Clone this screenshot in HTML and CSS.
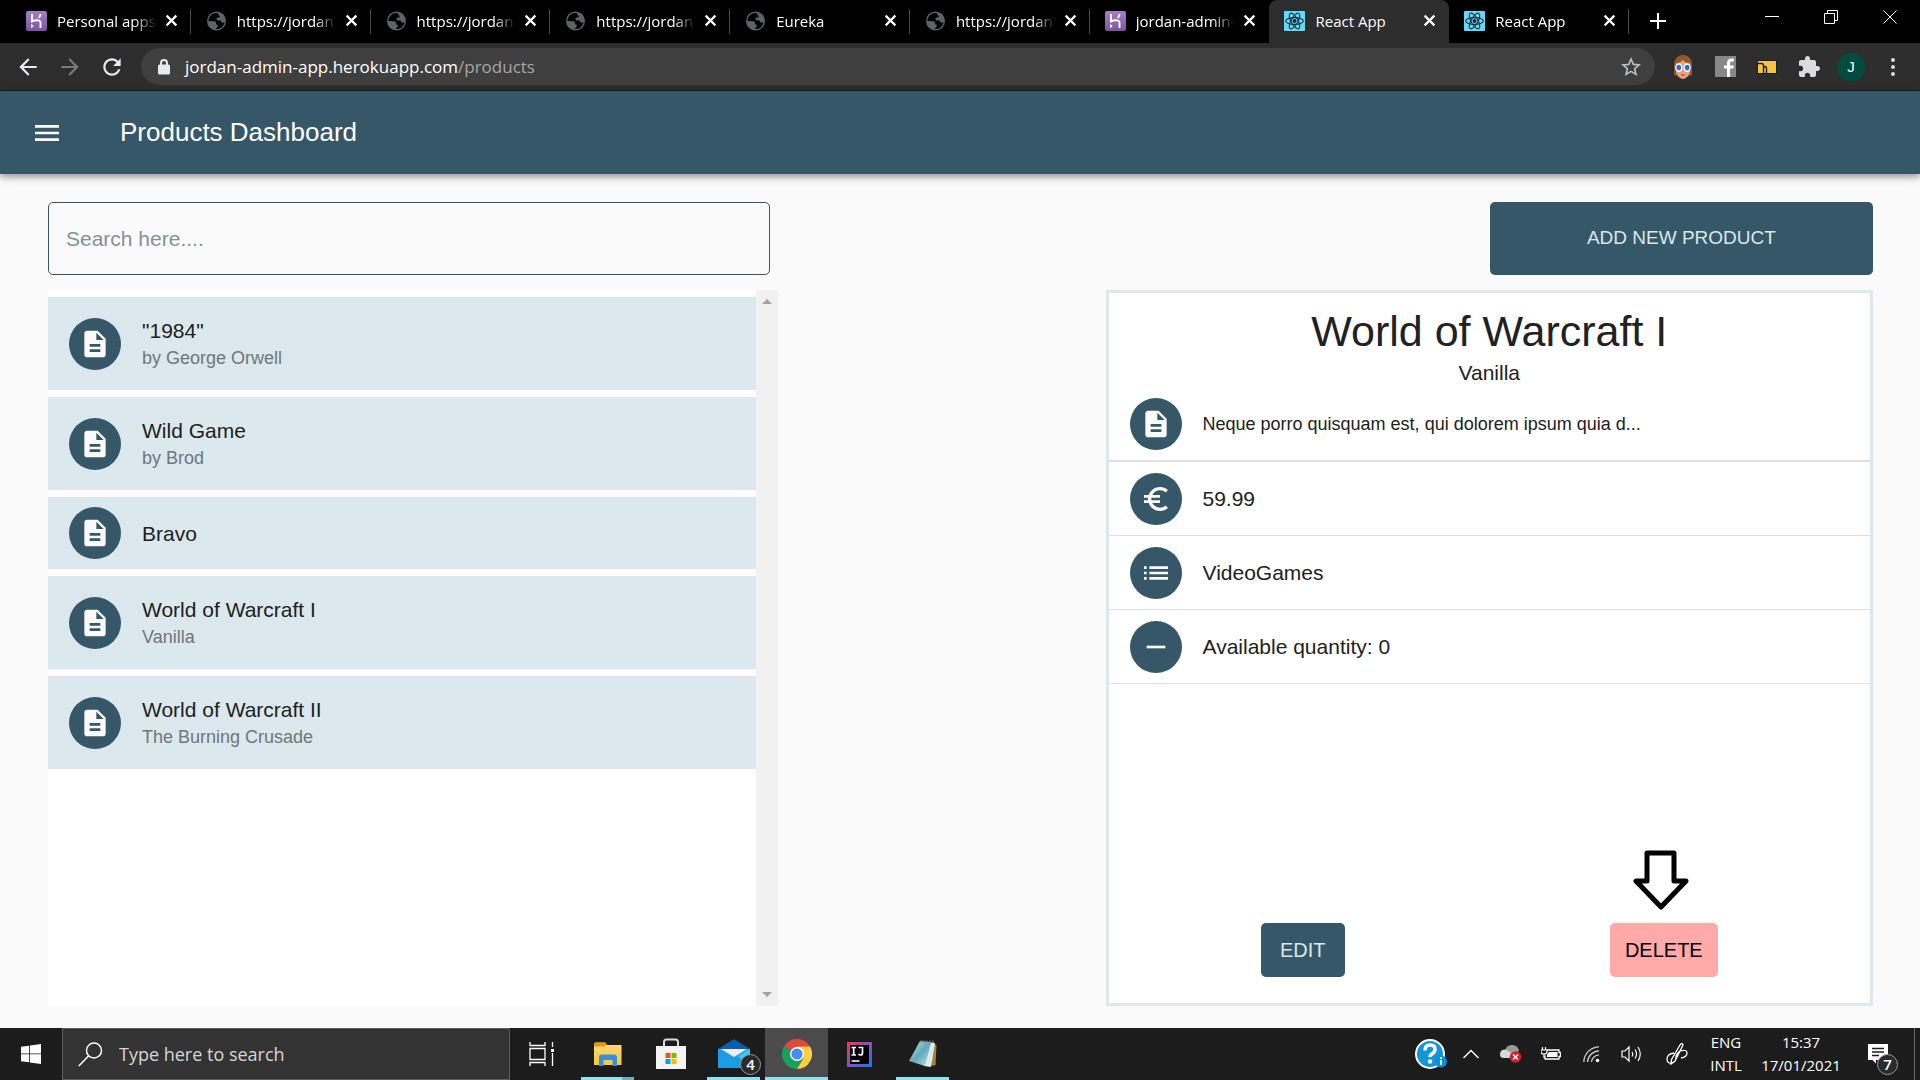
FILE: index.html
```html
<!DOCTYPE html>
<html lang="en">
<head>
<meta charset="utf-8">
<title>React App</title>
<link rel="stylesheet" href="styles.css">
</head>
<body>
<svg class="sprite" aria-hidden="true">
  <defs>
    <linearGradient id="g-heroku" x1="0" y1="0" x2="0" y2="1"><stop offset="0" stop-color="#a57fc6"/><stop offset="1" stop-color="#7a559f"/></linearGradient>
    <linearGradient id="g-idea" x1="0" y1="0" x2="1" y2="1"><stop offset="0" stop-color="#fe315d"/><stop offset=".5" stop-color="#8a4fc4"/><stop offset="1" stop-color="#087cfa"/></linearGradient>
    <linearGradient id="g-note" x1="0" y1="0" x2="1" y2="1"><stop offset="0" stop-color="#d6eef2"/><stop offset=".5" stop-color="#5fa9b8"/><stop offset="1" stop-color="#c4e4ea"/></linearGradient>
    <linearGradient id="g-folder" x1="0" y1="0" x2="0" y2="1"><stop offset="0" stop-color="#ffd977"/><stop offset="1" stop-color="#f9c83c"/></linearGradient>
  </defs>
  <symbol id="heroku" viewBox="0 0 21 20"><rect width="21" height="20" rx="2" fill="url(#g-heroku)"/><path d="M6 3v7.500c2-1 8.500-2.500 8.500 1V17M14.500 3c0 1.500-.6 2.800-1.600 4" fill="none" stroke="#fff" stroke-width="1.900"/><path d="M5.200 13v4.200L7.800 15z" fill="#fff"/></symbol>
  <symbol id="globe" viewBox="0 0 20 20"><circle cx="10" cy="10" r="9.500" fill="#5f6368"/><path d="M11.500 2.200C7 1 2 4.500 2 10l5.600.2c1.400 0 2 .8 2 2v1.300h1.600v2.200L9 17.900c4.800.7 8.600-2.600 9-7-1 1-2.500 1-3.200 0l-.7-1.500h-3.200l-1-1.200c0-1.400.7-1.800 1.600-1.800h1.600V4.800c-1-.6-1.700-1.500-1.600-2.600z" fill="#000"/></symbol>
  <symbol id="react" viewBox="0 0 21 20"><rect width="21" height="20" rx="1" fill="#61dafb"/><g fill="none" stroke="#222b33" stroke-width="1.100"><ellipse cx="10.500" cy="10" rx="8.800" ry="3.400"/><ellipse cx="10.500" cy="10" rx="8.800" ry="3.400" transform="rotate(60 10.500 10)"/><ellipse cx="10.500" cy="10" rx="8.800" ry="3.400" transform="rotate(120 10.500 10)"/></g><circle cx="10.500" cy="10" r="2" fill="#222b33"/></symbol>
  <symbol id="close" viewBox="0 0 12 12"><path d="M1.500 1.500l9 9M10.500 1.500l-9 9" stroke="currentColor" stroke-width="2"/></symbol>
  <symbol id="doc" viewBox="0 0 24 24"><path fill="currentColor" d="M14 2H6c-1.100 0-1.990.9-1.990 2L4 20c0 1.100.89 2 1.990 2H18c1.100 0 2-.9 2-2V8l-6-6zm2 16H8v-2h8v2zm0-4H8v-2h8v2zm-3-5V3.500L18.500 9H13z"/></symbol>
  <symbol id="euro" viewBox="0 0 24 24"><path fill="currentColor" d="M15 18.500c-2.510 0-4.680-1.420-5.760-3.500H15v-2H8.580c-.05-.33-.08-.66-.08-1s.03-.67.08-1H15V9H9.240C10.320 6.920 12.500 5.500 15 5.500c1.610 0 3.090.59 4.230 1.570L21 5.300C19.410 3.870 17.300 3 15 3c-3.920 0-7.240 2.510-8.480 6H3v2h3.060c-.04.33-.06.66-.06 1s.02.67.06 1H3v2h3.520c1.240 3.490 4.560 6 8.480 6 2.310 0 4.410-.87 6-2.300l-1.780-1.770c-1.130.98-2.600 1.570-4.220 1.570z"/></symbol>
  <symbol id="list" viewBox="0 0 24 24"><path fill="currentColor" d="M3 13h2v-2H3v2zm0 4h2v-2H3v2zm0-8h2V7H3v2zm4 4h14v-2H7v2zm0 4h14v-2H7v2zM7 7v2h14V7H7z"/></symbol>
  <symbol id="minus" viewBox="0 0 24 24"><path fill="currentColor" d="M19 13H5v-2h14v2z"/></symbol>
  <symbol id="arrow" viewBox="0 0 24 24"><path fill="currentColor" d="M20 11H7.830l5.590-5.590L12 4l-8 8 8 8 1.410-1.410L7.830 13H20v-2z"/></symbol>
</svg>

<div class="tabstrip">
  <div class="tabs">
    <div class="tab"><svg class="favicon"><use href="#heroku"/></svg><span class="tab-title">Personal apps</span><button class="tab-close" aria-label="Close tab"><svg><use href="#close"/></svg></button></div>
    <div class="tab"><svg class="favicon"><use href="#globe"/></svg><span class="tab-title">https://jordan</span><button class="tab-close" aria-label="Close tab"><svg><use href="#close"/></svg></button></div>
    <div class="tab"><svg class="favicon"><use href="#globe"/></svg><span class="tab-title">https://jordan</span><button class="tab-close" aria-label="Close tab"><svg><use href="#close"/></svg></button></div>
    <div class="tab"><svg class="favicon"><use href="#globe"/></svg><span class="tab-title">https://jordan</span><button class="tab-close" aria-label="Close tab"><svg><use href="#close"/></svg></button></div>
    <div class="tab"><svg class="favicon"><use href="#globe"/></svg><span class="tab-title">Eureka</span><button class="tab-close" aria-label="Close tab"><svg><use href="#close"/></svg></button></div>
    <div class="tab"><svg class="favicon"><use href="#globe"/></svg><span class="tab-title">https://jordan</span><button class="tab-close" aria-label="Close tab"><svg><use href="#close"/></svg></button></div>
    <div class="tab tab-before-active"><svg class="favicon"><use href="#heroku"/></svg><span class="tab-title">jordan-admin-</span><button class="tab-close" aria-label="Close tab"><svg><use href="#close"/></svg></button></div>
    <div class="tab tab-active"><svg class="favicon"><use href="#react"/></svg><span class="tab-title">React App</span><button class="tab-close" aria-label="Close tab"><svg><use href="#close"/></svg></button></div>
    <div class="tab"><svg class="favicon"><use href="#react"/></svg><span class="tab-title">React App</span><button class="tab-close" aria-label="Close tab"><svg><use href="#close"/></svg></button></div>
  </div>
  <button class="new-tab" aria-label="New tab"><svg width="16" height="16" viewBox="0 0 16 16"><path d="M8 0v16M0 8h16" stroke="#fff" stroke-width="2"/></svg></button>
  <div class="window-controls">
    <button aria-label="Minimise"><svg width="14" height="14" viewBox="0 0 14 14"><path d="M0 6.500h14" stroke="#fff"/></svg></button>
    <button aria-label="Restore"><svg width="14" height="14" viewBox="0 0 14 14" fill="none" stroke="#fff"><path d="M.5 3.500h10v10H.5zM3.500 3.500v-3h10v10h-3"/></svg></button>
    <button aria-label="Close"><svg width="14" height="14" viewBox="0 0 14 14"><path d="M.5.5l13 13M13.500.5l-13 13" stroke="#fff"/></svg></button>
  </div>
</div>

<div class="toolbar">
  <div class="nav-buttons">
    <button aria-label="Back"><svg width="26" height="26"><use href="#arrow"/></svg></button>
    <button class="dim" aria-label="Forward"><svg width="26" height="26" class="flip"><use href="#arrow"/></svg></button>
    <button aria-label="Reload"><svg width="26" height="26" viewBox="0 0 24 24"><path fill="currentColor" d="M17.650 6.350C16.200 4.900 14.210 4 12 4c-4.420 0-7.990 3.580-7.990 8s3.570 8 7.990 8c3.730 0 6.840-2.550 7.730-6h-2.080c-.82 2.330-3.040 4-5.650 4-3.310 0-6-2.690-6-6s2.690-6 6-6c1.660 0 3.140.69 4.220 1.780L13 11h7V4l-2.350 2.350z"/></svg></button>
  </div>
  <div class="omnibox">
    <svg class="lock" width="12" height="16" viewBox="0 0 12 16"><path d="M3 6V4a3 3 0 0 1 6 0v2" fill="none" stroke="#e8eaed" stroke-width="2"/><rect y="5.500" width="12" height="10" rx="1.500" fill="#e8eaed"/></svg>
    <span class="url">jordan-admin-app.herokuapp.com<span class="path">/products</span></span>
    <button aria-label="Bookmark this page"><svg width="24" height="24" viewBox="0 0 24 24"><path fill="#bdc1c6" d="M22 9.240l-7.190-.62L12 2 9.190 8.630 2 9.240l5.460 4.730L5.820 21 12 17.270 18.180 21l-1.630-7.030L22 9.240zM12 15.400l-3.760 2.270 1-4.280-3.320-2.880 4.380-.38L12 6.100l1.710 4.040 4.380.38-3.320 2.880 1 4.280L12 15.400z"/></svg></button>
  </div>
  <div class="extensions">
    <button aria-label="Extension"><svg width="20" height="24" viewBox="0 0 20 20" preserveAspectRatio="none"><path d="M1 17V9C1 3 5 0 10 0s9 3 9 9v8z" fill="#96592e"/><path d="M3 7c4 0 6-2 7-3 1 2 4 3 7 3v6c0 4-4 7-7 7s-7-3-7-7z" fill="#e8a47c"/><path d="M7 16h6l-3 2z" fill="#c4504a"/><g fill="#1a73e8" stroke="#fff" stroke-width="1.300"><circle cx="5.800" cy="10.500" r="3"/><circle cx="14.200" cy="10.500" r="3"/></g></svg></button>
    <button aria-label="Facebook"><svg width="21" height="21" viewBox="0 0 21 21"><rect width="21" height="21" fill="#888"/><path d="M12 21v-8.500H9v-3h3V7c0-3 1.500-4.500 4.500-4.500h2.200v3H17c-1.400 0-1.900.6-1.900 1.900v2.100h3.600l-.5 3h-3.100V21z" fill="#fff"/></svg></button>
    <button aria-label="Extension"><svg width="20" height="16" viewBox="0 0 20 16"><path d="M.5 1.500h19v13H.5z" fill="#f5c542" stroke="#1d1d1d"/><path d="M0 4.500h4.500q2 0 2 2V15M6.500 15V9.500q0-2 1.500-2t1.500 2V15" fill="none" stroke="#1d1d1d" stroke-width="1.400"/></svg></button>
    <button aria-label="Extensions"><svg width="22" height="22" viewBox="1 1 22 22"><path fill="#dadce0" d="M20.500 11H19V7c0-1.100-.9-2-2-2h-4V3.500C13 2.120 11.880 1 10.500 1S8 2.120 8 3.500V5H4c-1.100 0-1.990.9-1.990 2v3.800H3.500c1.490 0 2.700 1.210 2.700 2.700s-1.210 2.700-2.700 2.700H2V20c0 1.100.9 2 2 2h3.800v-1.500c0-1.490 1.210-2.700 2.700-2.700 1.490 0 2.700 1.210 2.700 2.700V22H17c1.100 0 2-.9 2-2v-4h1.500c1.380 0 2.500-1.120 2.500-2.500S21.880 11 20.500 11z"/></svg></button>
    <button class="profile" aria-label="Profile">J</button>
    <button aria-label="Menu"><svg width="6" height="20" viewBox="0 0 6 20" fill="#dadce0"><circle cx="3" cy="3" r="2"/><circle cx="3" cy="10" r="2"/><circle cx="3" cy="17" r="2"/></svg></button>
  </div>
</div>

<header class="app-header">
  <button class="menu" aria-label="Open menu"><svg width="32" height="32" viewBox="0 0 24 24"><path fill="#fff" d="M3 18h18v-2H3v2zm0-5h18v-2H3v2zm0-7v2h18V6H3z"/></svg></button>
  <h1>Products Dashboard</h1>
</header>

<main>
  <div class="controls">
    <input class="search" type="text" placeholder="Search here...." aria-label="Search products">
    <button class="btn add">ADD NEW PRODUCT</button>
  </div>
  <div class="panels">
    <section class="list-panel">
      <ul class="products">
        <li><span class="avatar"><svg><use href="#doc"/></svg></span><div class="item-text"><p class="primary">"1984"</p><p class="secondary">by George Orwell</p></div></li>
        <li><span class="avatar"><svg><use href="#doc"/></svg></span><div class="item-text"><p class="primary">Wild Game</p><p class="secondary">by Brod</p></div></li>
        <li><span class="avatar"><svg><use href="#doc"/></svg></span><div class="item-text"><p class="primary">Bravo</p></div></li>
        <li><span class="avatar"><svg><use href="#doc"/></svg></span><div class="item-text"><p class="primary">World of Warcraft I</p><p class="secondary">Vanilla</p></div></li>
        <li><span class="avatar"><svg><use href="#doc"/></svg></span><div class="item-text"><p class="primary">World of Warcraft II</p><p class="secondary">The Burning Crusade</p></div></li>
      </ul>
      <div class="scrollbar">
        <svg width="10" height="5" viewBox="0 0 10 5"><path d="M5 0l5 5H0z" fill="#a3a3a3"/></svg>
        <svg width="10" height="5" viewBox="0 0 10 5"><path d="M5 5l5-5H0z" fill="#a3a3a3"/></svg>
      </div>
    </section>
    <section class="detail">
      <h2>World of Warcraft I</h2>
      <p class="subtitle">Vanilla</p>
      <ul class="facts">
        <li class="description"><span class="avatar"><svg><use href="#doc"/></svg></span><span>Neque porro quisquam est, qui dolorem ipsum quia d...</span></li>
        <li><span class="avatar"><svg><use href="#euro"/></svg></span><span>59.99</span></li>
        <li><span class="avatar"><svg><use href="#list"/></svg></span><span>VideoGames</span></li>
        <li><span class="avatar"><svg><use href="#minus"/></svg></span><span>Available quantity: 0</span></li>
      </ul>
      <div class="actions">
        <button class="btn edit">EDIT</button>
        <div class="delete-wrap">
          <svg class="pointer" width="56" height="60" viewBox="0 0 56 60"><path d="M14 3h27v28h12L28 57 3 31h11z" fill="#fff" stroke="#000" stroke-width="5" stroke-linejoin="round"/></svg>
          <button class="btn delete">DELETE</button>
        </div>
      </div>
    </section>
  </div>
</main>

<footer class="taskbar">
  <button class="start" aria-label="Start"><svg width="20" height="20" viewBox="0 0 20 20"><path d="M0 2.800L8.200 1.700v7.900H0zM9 1.500L20 0v9.600H9zM0 10.300h8.200v8L0 17.200zM9 10.300h11V20L9 18.500z" fill="#fff"/></svg></button>
  <label class="task-search">
    <svg width="25" height="25" viewBox="0 0 25 25" fill="none" stroke="#fff" stroke-width="1.500"><circle cx="16" cy="8.500" r="7.500"/><path d="M10.500 14L.8 24"/></svg>
    <input type="text" placeholder="Type here to search" aria-label="Type here to search">
  </label>
  <div class="apps">
    <button class="task-view" aria-label="Task view"><svg width="25" height="24" viewBox="0 0 25 24" fill="none" stroke="#fff" stroke-width="1.300"><path d="M1 0v3.500h15V0M1 24v-3.500h15V24M1 6.500h15v11H1zM23.500 0v5M23.500 11v13"/><path d="M22 7h3v3h-3z" fill="#fff" stroke="none"/></svg></button>
    <button class="app running grouped" aria-label="File Explorer"><svg width="28" height="24" viewBox="0 0 28 24"><path d="M0 3q0-2.500 2-2.500h8.500q2 0 2 2.500h15v20H0z" fill="url(#g-folder)"/><path d="M0 4.500V2Q0 .5 1.500.5H11q1.500 0 1.500 1.500-.5 2.500-3 2.500z" fill="#e09a12"/><path d="M5 24V15q0-2.500 2.500-2.500h13q2.500 0 2.500 2.500v9h-4.500v-6h-9v6z" fill="#3a8fd6"/></svg></button>
    <button class="app" aria-label="Store"><svg width="30" height="32" viewBox="0 0 30 32"><path d="M8 9V4q0-2.500 2.500-2.500h9Q22 1.500 22 4v5" fill="none" stroke="#ddd" stroke-width="2"/><path d="M0 8h30v23H0z" fill="#f4f4f4"/><path d="M9.500 15h5v5h-5z" fill="#f25022"/><path d="M15.500 15h5v5h-5z" fill="#7fba00"/><path d="M9.500 21h5v5h-5z" fill="#00a4ef"/><path d="M15.500 21h5v5h-5z" fill="#ffb900"/></svg></button>
    <button class="app running" aria-label="Mail"><svg width="32" height="30" viewBox="0 0 32 30"><path d="M0 10L16 0l16 10v12H0z" fill="#0a5cad"/><path d="M0 10v19h32V10z" fill="#1f9be6"/><path d="M20 17L32 10v19z" fill="#3ccbf4"/><path d="M3 10h26L16 18z" fill="#eee"/></svg><span class="badge badge-mail">4</span></button>
    <button class="app running active" aria-label="Chrome"><svg width="30" height="30" viewBox="0 0 30 30"><path d="M15 15L2 7.500A15 15 0 0 1 28 7.500H15z" fill="#dd4b3e"/><path d="M15 15L2 7.500A15 15 0 0 0 15 30l6.500-11z" fill="#1a9f5d"/><path d="M15 7.500h13A15 15 0 0 1 15 30l6.500-11z" fill="#ffce44"/><circle cx="15" cy="15" r="7" fill="#fff"/><circle cx="15" cy="15" r="5.600" fill="#4a8af4"/></svg></button>
    <button class="app" aria-label="IntelliJ IDEA"><svg width="25" height="25" viewBox="0 0 25 25"><path d="M0 0h25v25H0z" fill="url(#g-idea)"/><path d="M3 3h19v19H3z" fill="#000"/><path d="M4.500 5.500h4.500M6.700 5v8M4.500 13h4.500M11.500 5.500h4v5.500q0 2-2 2-1.200 0-2-1M4.500 19h8" fill="none" stroke="#fff" stroke-width="1.700"/></svg></button>
    <button class="app running" aria-label="Notepad"><svg width="28" height="28" viewBox="0 0 28 28"><path d="M22 3l5.500 2-1 20-4 1z" fill="#a9833f"/><path d="M11 1l15 2-4 24-7-1z" fill="#dcebee"/><path d="M11 1l11 2-6 23L0 21z" fill="url(#g-note)"/><path d="M11 1.500h14" stroke="#777" stroke-width="2" stroke-dasharray="1.500 1.500"/></svg></button>
  </div>
  <div class="tray">
    <button class="tray-item" aria-label="Help"><svg width="32" height="30" viewBox="0 0 32 30"><circle cx="15" cy="15" r="14" fill="#1296d6" stroke="#fff" stroke-width="2"/><path d="M10 11.500q0-5.500 5-5.500t5 4.500q0 2.500-2.500 4t-2.500 3.500" fill="none" stroke="#fff" stroke-width="3.500"/><circle cx="15" cy="22.500" r="2.200" fill="#fff"/><circle cx="26" cy="22.500" r="6" fill="#0d8fd0"/><path d="M26 21v5M26 18v2" stroke="#fff" stroke-width="1.600"/></svg></button>
    <button class="tray-item" aria-label="Show hidden icons"><svg width="16" height="10" viewBox="0 0 16 10"><path d="M.5 9L8 1.500 15.500 9" fill="none" stroke="#fff" stroke-width="1.400"/></svg></button>
    <button class="tray-item" aria-label="OneDrive"><svg width="22" height="18" viewBox="0 0 22 18"><path d="M5 6q1-6 7-6t7 6l-8 5z" fill="#9a9a9a"/><path d="M0 9.500q0-5 5-5 2.500 0 4.500 2.500L16 9v4H4Q0 13 0 9.500z" fill="#d8d8d8"/><circle cx="15.500" cy="12" r="5.800" fill="#d3202e"/><path d="M13 9.500l5 5M18 9.500l-5 5" stroke="#fff" stroke-width="1.500"/></svg></button>
    <button class="tray-item" aria-label="Battery"><svg width="20" height="14" viewBox="0 0 20 14"><path d="M6 3h12v2.500h1.500v4H18V12H4V8.500" fill="#1c1c1c" stroke="#fff" stroke-width="1.300"/><path d="M8 5h8.500v5H6V7.500z" fill="#fff"/><path d="M1.500 0v3M4.500 0v3M0 3h6v2q0 2-3 2T0 5zM3 7v4" fill="none" stroke="#fff" stroke-width="1.200"/></svg></button>
    <button class="tray-item" aria-label="Wi-Fi"><svg width="17" height="17" viewBox="0 0 17 17" fill="none" stroke="#ccc" stroke-width="1.300"><path d="M.8 16A15.500 15.500 0 0 1 16 .8M4.500 16A12 12 0 0 1 16 4.800M8.500 16A8 8 0 0 1 16 8.800"/><circle cx="14.500" cy="14.500" r="1.800" fill="#fff" stroke="none"/></svg></button>
    <button class="tray-item" aria-label="Volume"><svg width="21" height="18" viewBox="0 0 21 18" fill="none" stroke="#fff" stroke-width="1.200"><path d="M1 6h3l4-4v14l-4-4H1zM11 7q1.500 2 0 4.500M14 4.500q3 4.500 0 9M17 2q4.500 7 0 14"/></svg></button>
    <button class="tray-item pen" aria-label="Pen workspace"><svg width="22" height="22" viewBox="0 0 22 22" fill="none" stroke="#fff" stroke-width="1.300"><path d="M14 2q2-3 3 0L9 18l-4 3 .5-4.500zM8 10Q1 11 1 16t5 4q4-1 4-6 0-3 4-6 7-2 7 2t-6 5"/></svg></button>
    <div class="stamp lang"><span>ENG</span><span>INTL</span></div>
    <div class="stamp clock"><span>15:37</span><span>17/01/2021</span></div>
    <button class="notify" aria-label="Notifications"><svg width="20" height="20" viewBox="0 0 20 20"><path d="M0 0h20v16H8v3.500L4.500 16H0z" fill="#fff"/><path d="M4 4.500h12M4 8h12M4 11.500h7" stroke="#1c1c1c" stroke-width="1.300"/></svg><span class="badge badge-notify">7</span></button>
  </div>
</footer>
</body>
</html>
```
FILE: styles.css
```css
* { box-sizing: border-box; }

body {
  margin: 0;
  min-height: 100vh;
  display: flex;
  flex-direction: column;
  background: #fafafa;
  color: #212121;
  font-family: "Liberation Sans", Arial, sans-serif;
  font-size: 21px;
}

h1, h2, p, ul { margin: 0; padding: 0; font-weight: 400; }
ul { list-style: none; }
svg { display: block; flex: none; }
.sprite { position: absolute; width: 0; height: 0; }

button {
  padding: 0;
  border: 0;
  background: none;
  color: inherit;
  font: inherit;
}

input { font: inherit; }

/* Browser tabs */
.tabstrip {
  display: flex;
  height: 43px;
  padding-left: 11px;
  background: #000;
  color: #fff;
  font: 15px/20px "Open Sans", sans-serif;
}

.tabs { display: flex; flex: 0 1 1618px; min-width: 0; }

.tab {
  position: relative;
  display: flex;
  flex: 1 1 0;
  align-items: center;
  min-width: 0;
  padding: 0 13px 2px 15px;
}

.tab::after {
  content: "";
  position: absolute;
  right: 0;
  top: 9px;
  width: 1px;
  height: 25px;
  background: #4a4a4a;
}

.tab-before-active::after,
.tab-active::after { display: none; }

.tab-active { background: #2d2d2d; border-radius: 8px 8px 0 0; }

.favicon { width: 21px; height: 20px; }

.tab-title {
  flex: 1;
  margin: 0 4px 0 10px;
  overflow: hidden;
  white-space: nowrap;
  mask-image: linear-gradient(90deg, #000 74%, transparent 96%);
}

.tab-active .tab-title { mask-image: none; }
.tab-close svg { width: 13px; height: 13px; }
.new-tab { width: 58px; padding-bottom: 1px; display: grid; place-items: center; }
.window-controls { display: flex; flex: 1; justify-content: flex-end; height: 34px; padding-right: 1px; }
.window-controls button { width: 59px; display: grid; place-items: center; }

/* Browser toolbar */
.toolbar {
  display: flex;
  align-items: center;
  height: 48px;
  background: #2d2d2d;
  border-bottom: 1px solid #1c1c1c;
  color: #e8eaed;
}

.nav-buttons { display: flex; gap: 16px; padding: 0 16px 0 15px; }
.nav-buttons .dim { color: #7a7a7a; }
.flip { transform: scaleX(-1); }

.omnibox {
  display: flex;
  flex: 1;
  align-items: center;
  height: 37px;
  padding: 0 12px 0 17px;
  border-radius: 19px;
  background: #3f3f3f;
  font: 17px/24px "Open Sans", sans-serif;
}

.url { flex: 1; margin-left: 15px; color: #fff; }
.path { color: #a6a6a6; }
.extensions { display: flex; padding: 0 6px 0 7px; }
.extensions button { width: 42px; height: 28px; display: grid; place-items: center; }

.extensions .profile {
  width: 28px;
  margin: 0 7px;
  border-radius: 50%;
  background: #004d40;
  color: #fff;
  font: 15px/20px "Liberation Sans", Arial, sans-serif;
}

/* Page header */
.app-header {
  position: relative;
  display: flex;
  align-items: center;
  gap: 57px;
  height: 83px;
  padding: 0 31px;
  background: #365767;
  color: #fff;
  box-shadow: 0 2px 5px rgba(0, 0, 0, .2), 0 5px 6px rgba(0, 0, 0, .14), 0 1px 12px rgba(0, 0, 0, .12);
}

h1 { padding-bottom: 2px; font-size: 26px; line-height: 40px; }

/* Page content */
main {
  display: flex;
  flex: 1;
  flex-direction: column;
  gap: 15px;
  padding: 28px 47px 22px 48px;
}

.controls, .panels { display: flex; justify-content: space-between; }
.panels { flex: 1; }

.search {
  width: calc(40% - 8px);
  height: 73px;
  padding: 0 17px;
  border: 1px solid #365767;
  border-radius: 5px;
  background: transparent;
}

.search::placeholder { color: #7f939c; opacity: 1; }

.btn { border-radius: 5px; background: #365767; color: #dae7ec; }
.add { width: 21%; padding-bottom: 2px; font-size: 19px; }

.list-panel { display: flex; width: 40%; background: #fff; }
.products { flex: 1; padding-top: 7px; }

.products li {
  display: flex;
  align-items: center;
  gap: 21px;
  margin-bottom: 7px;
  padding: 10px 21px;
  background: #dbe8ed;
}

.avatar {
  display: grid;
  flex: none;
  place-items: center;
  width: 52px;
  height: 52px;
  border-radius: 50%;
  background: #365767;
  color: #fafafa;
}

.avatar svg { width: 32px; height: 32px; }
.item-text { padding: 9px 0; }
.primary { line-height: 29px; }
.secondary { font-size: 18px; line-height: 26px; color: #6f777a; }

.scrollbar {
  display: flex;
  flex-direction: column;
  justify-content: space-between;
  align-items: center;
  width: 22px;
  padding: 9px 0;
  background: #f1f1f1;
}

.detail {
  display: flex;
  flex-direction: column;
  width: calc(42% + 1px);
  border: 3px solid #dbe8ed;
  background: #fff;
  text-align: center;
}

h2 { padding-top: 12px; font-size: 43px; line-height: 52px; }
.subtitle { line-height: 31px; }
.facts { text-align: left; }

.facts li {
  display: flex;
  align-items: center;
  gap: 21px;
  height: 74px;
  padding: 0 21px;
  border-bottom: 1px solid #e0e0e0;
}

.facts .description { border-bottom-width: 2px; font-size: 18px; }

.actions {
  display: flex;
  justify-content: space-between;
  margin-top: auto;
  padding: 0 20% 26px;
}

.actions .btn { height: 54px; padding: 0 15px; font-size: 20px; }
.edit { min-width: 84px; }
.delete-wrap { position: relative; }
.actions .delete { background: #ffa9a9; color: #000; }

.pointer { position: absolute; left: 23px; bottom: 67px; }

/* Desktop taskbar */
.taskbar {
  display: flex;
  height: 52px;
  background: #1c1c1c;
  color: #fff;
  font-family: "Open Sans", sans-serif;
}

.start { width: 62px; display: grid; place-items: center; }

.task-search {
  display: flex;
  align-items: center;
  gap: 16px;
  width: 448px;
  padding: 0 15px;
  border: 1px solid #5c5c5c;
  background: #333;
}

.task-search input {
  flex: 1;
  min-width: 0;
  padding: 0;
  border: 0;
  background: none;
  color: #fff;
  font-size: 18px;
}

.task-search input::placeholder { color: #d6d6d6; opacity: 1; }

.apps { display: flex; }
.task-view { width: 66px; padding-right: 4px; display: grid; place-items: center; }
.app { position: relative; width: 63px; display: grid; place-items: center; }

.running::after {
  content: "";
  position: absolute;
  left: 5px;
  right: 5px;
  bottom: 0;
  height: 3px;
  background: #8be3ef;
}

.grouped::after { background: linear-gradient(90deg, #8be3ef 41px, #6fb0ba 41px); }
.active { background: #4b4b4b; }
.active::after { left: 0; right: 0; }

.badge {
  position: absolute;
  width: 21px;
  height: 21px;
  border: 1px solid #999;
  border-radius: 50%;
  background: #2b2b2b;
  color: #fff;
  font-size: 15px;
  font-weight: 600;
  line-height: 19px;
  text-align: center;
}

.badge-mail { right: 4px; bottom: 5px; }

.tray { display: flex; flex: 1; justify-content: flex-end; align-items: center; padding-right: 5px; }
.tray-item { width: 40px; height: 52px; display: grid; place-items: center; }
.pen { width: 52px; }

.stamp { display: flex; flex-direction: column; align-items: center; font-size: 15px; line-height: 23px; }
.lang { width: 46px; }
.clock { width: 104px; }

.notify {
  position: relative;
  width: 62px;
  height: 52px;
  padding-left: 15px;
  border-right: 1px solid #666;
  display: grid;
  align-items: center;
}

.badge-notify { left: 24px; bottom: 5px; }
```
